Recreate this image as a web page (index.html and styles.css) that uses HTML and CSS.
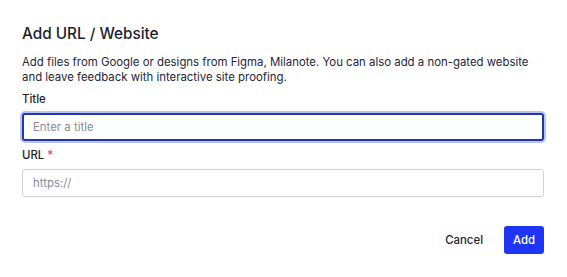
FILE: index.html
```html
<!DOCTYPE html>
<html>
<head>
<meta charset="utf-8">
<link rel="stylesheet" href="styles.css">
</head>
<body>
<div class="dialog">
  <h1 class="title">Add URL / Website</h1>
  <p class="desc">Add files from Google or designs from Figma, Milanote. You can also add a non-gated website and leave feedback with interactive site proofing.</p>
  <div class="field">
    <label class="label">Title</label>
    <input class="input focused" type="text" placeholder="Enter a title">
  </div>
  <div class="field">
    <label class="label">URL <span class="req">*</span></label>
    <input class="input" type="text" placeholder="https://">
  </div>
  <div class="actions">
    <button class="btn cancel">Cancel</button>
    <button class="btn primary">Add</button>
  </div>
</div>
</body>
</html>
```
FILE: styles.css
```css
* { box-sizing: border-box; }
html, body { margin: 0; padding: 0; background: #fff; }
body { font-family: Inter, "Noto Sans", sans-serif; color: #1c1d30; }
.dialog { padding: 23px 23px 22px 22px; display: flex; flex-direction: column; }
.title { font-size: 15.3px; font-weight: 500; margin: 0; line-height: 20px; padding-top: 1px; }
.desc { font-size: 11.4px; line-height: 15px; margin: 11px 0 0; color: #25263a; }
.field { display: flex; flex-direction: column; margin-top: 7px; }
.label { font-size: 11.4px; font-weight: 500; line-height: 15px; margin: 0 0 6px; }
.req { color: #e0453a; }
.input { height: 28px; width: 100%; border: 1px solid #d2d2d6; border-radius: 3px; padding: 0 10px; font-family: inherit; font-size: 11.4px; color: #1c1d30; outline: none; }
.input::placeholder { color: #8a8b95; }
.input.focused { border: 2px solid #2337a8; padding: 0 9px; box-shadow: 0 0 0 2px #b8c4fb; }
.actions { display: flex; justify-content: flex-end; align-items: center; gap: 8px; margin-top: 29px; }
.btn { font-family: inherit; font-size: 11.4px; font-weight: 500; height: 28px; border: none; border-radius: 3px; background: transparent; cursor: pointer; }
.cancel { color: #1c1d30; padding: 0 13px; }
.primary { background: #1f35f5; color: #fff; padding: 0; width: 40px; }
```
